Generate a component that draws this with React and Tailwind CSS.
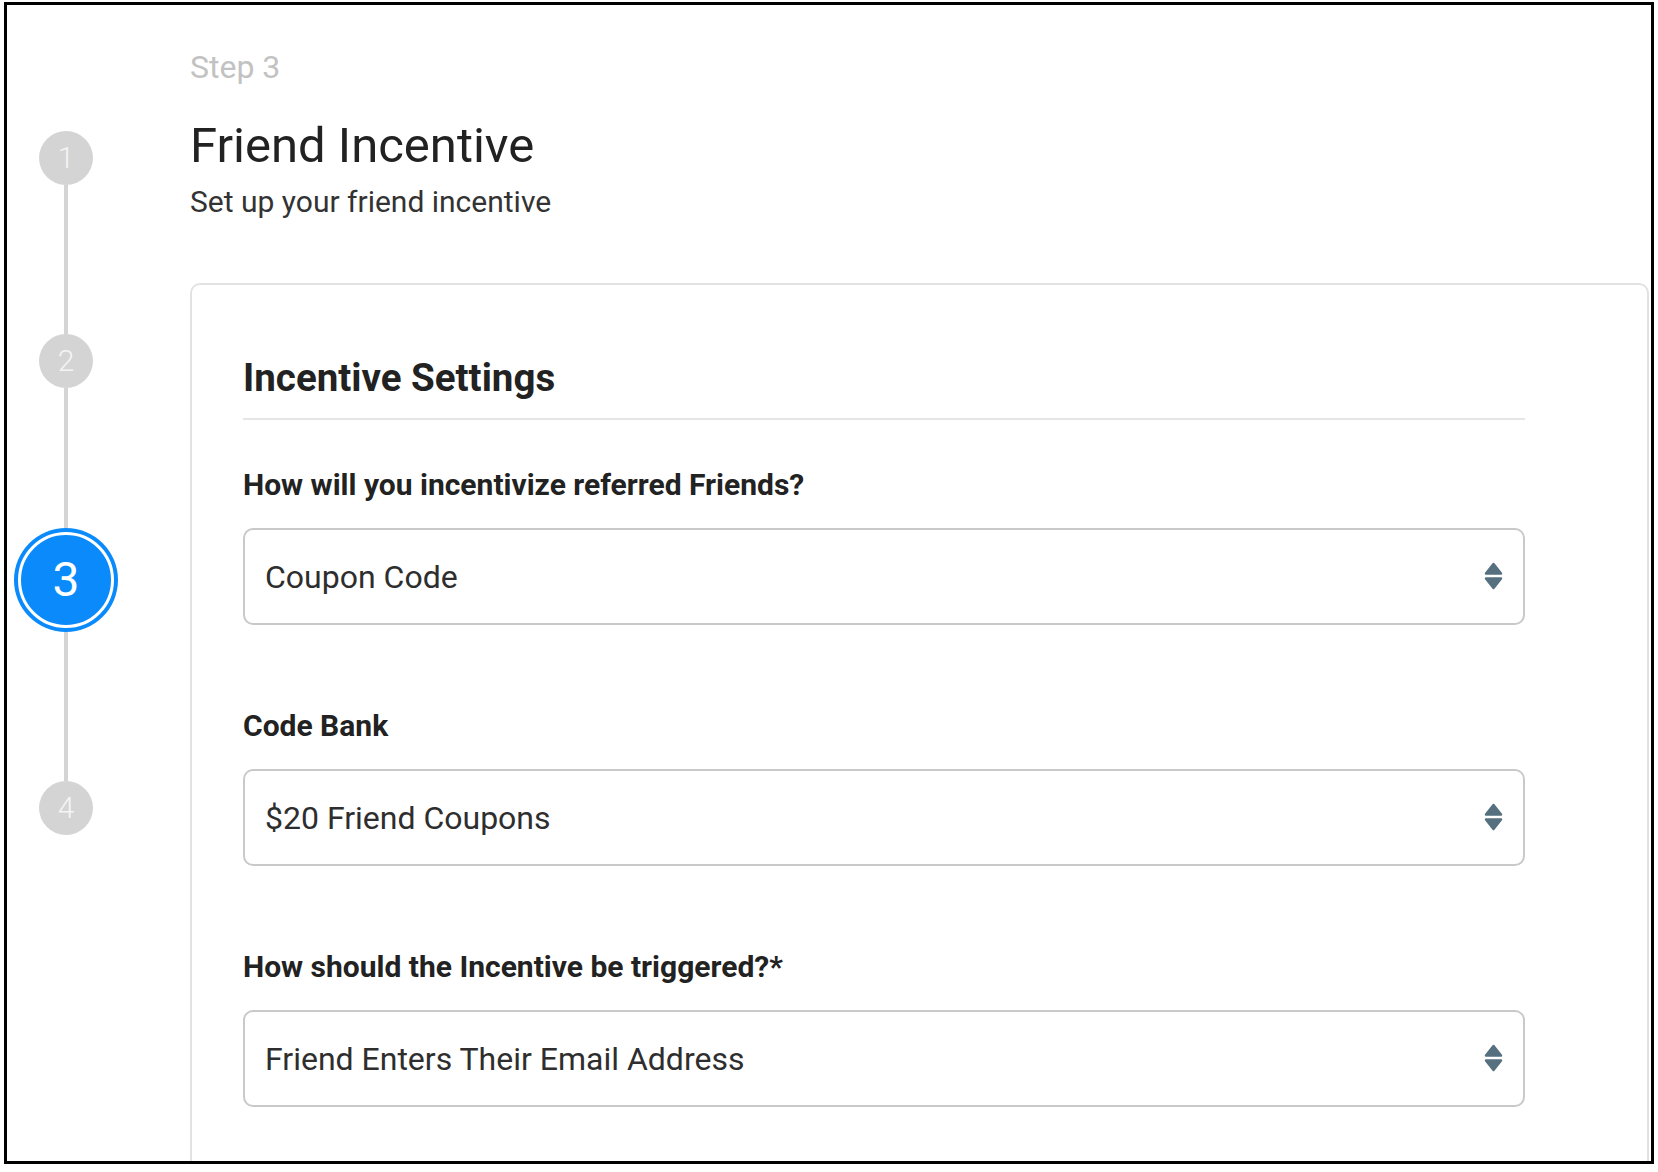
import React from 'react';

const SortIcon = () => (
   <svg width="19" height="29" viewBox="0 0 19 29" fill="#56707f" stroke="#56707f" strokeWidth="2.5" strokeLinejoin="round">
      <path d="M9.5 2 L17 11.5 H2 Z" />
      <path d="M2 16.5 H17 L9.5 26 Z" />
   </svg>
);

const StepDot = ({ n }) => (
   <div className="w-[54px] h-[54px] rounded-full bg-[#d4d4d4] flex items-center justify-center text-[30px] font-light text-[#f4f4f4] leading-none">
      {n}
   </div>
);

const Segment = ({ h }) => <div className={`w-[4px] bg-[#d4d4d4] ${h}`} />;

const SelectBox = ({ value }) => (
   <div className="h-[97px] rounded-[10px] border-2 border-[#c9c9c9] flex items-center justify-between pl-[20px] pr-[20px]">
      <span className="text-[32px] text-[#2e2e2e] leading-none">{value}</span>
      <SortIcon />
   </div>
);

const Field = ({ label, value, first }) => (
   <div className={first ? 'mt-[47px]' : 'mt-[83px]'}>
      <div className="text-[30px] leading-[36px] font-bold text-[#222] mb-[25px]">{label}</div>
      <SelectBox value={value} />
   </div>
);

export default function App() {
   return (
      <div className="w-[1658px] h-[1172px] bg-white pt-[2px] pl-[4px]" style={{ fontFamily: 'Roboto, "Liberation Sans", sans-serif' }}>
         <div className="w-[1650px] h-[1162px] border-[3px] border-black overflow-hidden flex">
            {/* stepper */}
            <div className="w-[118px] shrink-0 flex flex-col items-center pt-[126px]">
               <StepDot n="1" />
               <Segment h="h-[149px]" />
               <StepDot n="2" />
               <Segment h="h-[140px]" />
               <div className="w-[104px] h-[104px] rounded-full bg-[#0b8bfb] p-[4px]">
                  <div className="w-full h-full rounded-full border-[3px] border-white flex items-center justify-center text-white text-[48px] leading-none">
                     3
                  </div>
               </div>
               <Segment h="h-[149px]" />
               <StepDot n="4" />
            </div>

            {/* content */}
            <div className="ml-[65px] flex-1 flex flex-col pt-[44px]">
               <div className="text-[32px] leading-[36px] text-[#c2c2c2]">Step 3</div>
               <div className="mt-[33px] text-[49px] leading-[56px] text-[#222]">Friend Incentive</div>
               <div className="mt-[11px] text-[30px] leading-[34px] text-[#333]">Set up your friend incentive</div>

               <div className="mt-[64px] mr-[2px] flex-1 border-2 border-b-0 border-[#e2e2e2] rounded-t-[10px] pl-[51px] pt-[70px]">
                  <div className="w-[1282px]">
                     <div className="border-b-2 border-[#e6e6e6] pb-[17px]">
                        <div className="text-[38.5px] leading-[46px] font-bold text-[#222]">Incentive Settings</div>
                     </div>
                     <Field first label="How will you incentivize referred Friends?" value="Coupon Code" />
                     <Field label="Code Bank" value="$20 Friend Coupons" />
                     <Field label="How should the Incentive be triggered?*" value="Friend Enters Their Email Address" />
                  </div>
               </div>
            </div>
         </div>
      </div>
   );
}
